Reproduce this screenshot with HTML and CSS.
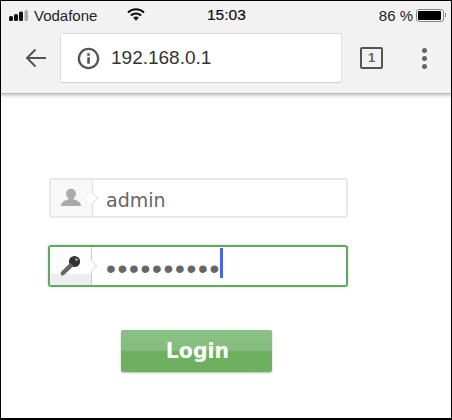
FILE: index.html
```html
<!DOCTYPE html>
<html lang="en">
<head>
<meta charset="utf-8">
<title>Login</title>
<link rel="stylesheet" href="styles.css">
</head>
<body>
<div class="frame">
  <header class="chrome">
    <div class="status">
      <div class="status-left">
        <svg class="signal" width="21" height="11" viewBox="0 0 21 11"><rect x="0" y="6" width="4" height="5" rx="1.5" fill="#111"/><rect x="5" y="4" width="4" height="7" rx="1.5" fill="#111"/><rect x="10" y="1.5" width="4" height="9.5" rx="1.5" fill="#111"/><rect x="15.5" y="0" width="3.5" height="11" rx="1.5" fill="#aaa"/></svg>
        <span>Vodafone</span>
      </div>
      <svg class="wifi" width="18" height="13" viewBox="0 0 18 13"><path d="M1 4.6a11.5 11.5 0 0 1 16 0" fill="none" stroke="#111" stroke-width="2"/><path d="M3.9 7.5a7.3 7.3 0 0 1 10.2 0" fill="none" stroke="#111" stroke-width="2"/><path d="M6.2 9.8a3.9 3.9 0 0 1 5.6 0L9 12.8z" fill="#111"/></svg>
      <div class="clock">15:03</div>
      <div class="status-right">
        <span>86 %</span>
        <div class="battery"><div class="battery-fill"></div></div>
        <div class="battery-tip"></div>
      </div>
    </div>
    <div class="toolbar">
      <svg class="back" width="22" height="20" viewBox="0 0 22 20"><path d="M21 10H2M10.5 1.5 2 10l8.5 8.5" fill="none" stroke="#555" stroke-width="2"/></svg>
      <div class="url">
        <svg class="info" width="23" height="23" viewBox="0 0 22 22"><circle cx="11" cy="11" r="9.2" fill="none" stroke="#555" stroke-width="2.2"/><rect x="9.8" y="9.8" width="2.5" height="6.2" fill="#555"/><rect x="9.8" y="6" width="2.5" height="2.4" fill="#555"/></svg>
        <span>192.168.0.1</span>
      </div>
      <div class="tabs">1</div>
      <div class="menu"><i></i><i></i><i></i></div>
    </div>
  </header>
  <main class="page">
    <div class="field">
      <div class="addon">
        <svg width="22" height="20" viewBox="0 0 22 20"><circle cx="11" cy="5.8" r="5" fill="#aaa"/><path d="M8.5 9h5v2.2c3.5 1 7.2 2.3 7.5 6.8H1c.3-4.5 4-5.8 7.5-6.8z" fill="#aaa"/></svg>
      </div>
      <div class="value">admin</div>
    </div>
    <div class="field active">
      <div class="addon">
        <svg width="24" height="22" viewBox="0 0 24 22"><circle cx="16.5" cy="6.5" r="5.6" fill="#333"/><circle cx="18.5" cy="4.6" r="1.4" fill="#999"/><path d="M12 8 2.5 17.5l1 3.5 3-1.5L15.5 11z" fill="#666"/></svg>
      </div>
      <div class="value dots"><span class="bullets">••••••••••</span><i class="caret"></i></div>
    </div>
    <button class="login" type="button">Login</button>
  </main>
</div>
</body>
</html>
```
FILE: styles.css
```css
* { box-sizing: border-box; }
html, body { margin: 0; padding: 0; background: #fff; }
.frame {
  width: 452px;
  height: 420px;
  border: 1px solid #000;
  border-width: 1px 1px 2px 1px;
  overflow: hidden;
  display: flex;
  flex-direction: column;
  font-family: "Liberation Sans", sans-serif;
}
.chrome {
  height: 92px;
  background: #f2f2f2;
  box-shadow: 0 1px 0 #bbb, 0 3px 3px #ccc;
  flex: none;
  position: relative;
}
.status {
  height: 28px;
  display: flex;
  align-items: center;
  padding: 0 5px 0 8px;
  position: relative;
  font-size: 15px;
  color: #222;
}
.status-left { display: flex; align-items: center; gap: 4px; width: 118px; }
.signal { margin-top: 0; }
.wifi { margin-top: -2px; margin-left: 0; }
.clock { margin-left: 62px; color: #111; font-size: 15.5px; -webkit-text-stroke: 0.2px #111; }
.status-right { margin-left: auto; display: flex; align-items: center; gap: 3px; }
.battery { width: 28px; height: 13px; border: 1px solid #888; border-radius: 3px; padding: 1px; }
.battery-fill { width: 23px; height: 9px; background: #000; border-radius: 1px; }
.battery-tip { width: 1px; height: 4px; background: #888; margin-left: -2px; }
.toolbar {
  display: flex;
  align-items: center;
  height: 50px;
  margin-top: 4px;
  padding-left: 24px;
}
.url {
  margin-left: 13px;
  width: 282px;
  height: 50px;
  background: #fff;
  border: 1px solid #ddd;
  border-bottom-color: #ccc;
  border-radius: 2px;
  display: flex;
  align-items: center;
  padding-left: 16px;
  gap: 11px;
  font-size: 19px;
  color: #333;
}
.tabs {
  margin-left: 18px;
  width: 23px;
  height: 22px;
  border: 2px solid #555;
  border-radius: 2px;
  font-size: 13px;
  font-weight: 700;
  color: #666;
  text-align: center;
  line-height: 18px;
}
.menu { margin-left: 39px; display: flex; flex-direction: column; gap: 3px; }
.menu i { display: block; width: 5px; height: 5px; border-radius: 50%; background: #666; }
.page {
  flex: 1;
  padding: 85px 0 0 47px;
  display: flex;
  flex-direction: column;
  align-items: flex-start;
}
.field {
  width: 299px;
  height: 40px;
  margin-left: 1px;
  border: 2px solid #e8e8e8;
  border-radius: 3px;
  display: flex;
  align-items: stretch;
  background: #fff;
}
.addon {
  width: 42px;
  flex: none;
  background: #f8f8f8;
  border-right: 1px solid #ddd;
  display: flex;
  align-items: center;
  justify-content: center;
  padding-right: 2px;
  position: relative;
}
.addon::after {
  content: "";
  position: absolute;
  right: -5px;
  top: 50%;
  width: 9px;
  height: 9px;
  margin-top: -5px;
  background: #fff;
  border-top: 1px solid #ddd;
  border-right: 1px solid #ddd;
  transform: rotate(45deg) scale(0.9);
}
.value {
  flex: 1;
  display: flex;
  align-items: center;
  padding: 3px 0 0 13px;
  font-family: "DejaVu Sans", sans-serif;
  font-size: 19px;
  color: #666;
}
.active {
  width: 300px;
  height: 42px;
  margin-left: 0;
  margin-top: 27px;
  border-color: #64a764;
  box-shadow: 0 0 3px #b5e0b5;
}
.active .addon { background: linear-gradient(#fff 0, #fff 70%, #eee 70%, #eee 100%); border-right-color: #ccc; }
.dots { padding: 0 0 0 14px; align-items: flex-start; }
.bullets {
  font-family: "Liberation Sans", sans-serif;
  font-size: 28px;
  line-height: 30px;
  letter-spacing: 1.7px;
  color: #666;
  margin-top: 7px;
}
.caret { display: block; width: 3px; height: 30px; background: #4a66e8; margin: 1px 0 0 -1px; }
.login {
  margin: 43px 0 0 73px;
  width: 151px;
  height: 42px;
  border: 0;
  border-radius: 2px;
  background: linear-gradient(#8ac283 0, #84bd7e 48%, #6cb060 52%, #6cb060 100%);
  box-shadow: 0 1px 2px #bbb;
  color: #fff;
  font-family: "DejaVu Sans", sans-serif;
  font-size: 20.5px;
  font-weight: 700;
  padding: 0 0 0 2px;
}
```
